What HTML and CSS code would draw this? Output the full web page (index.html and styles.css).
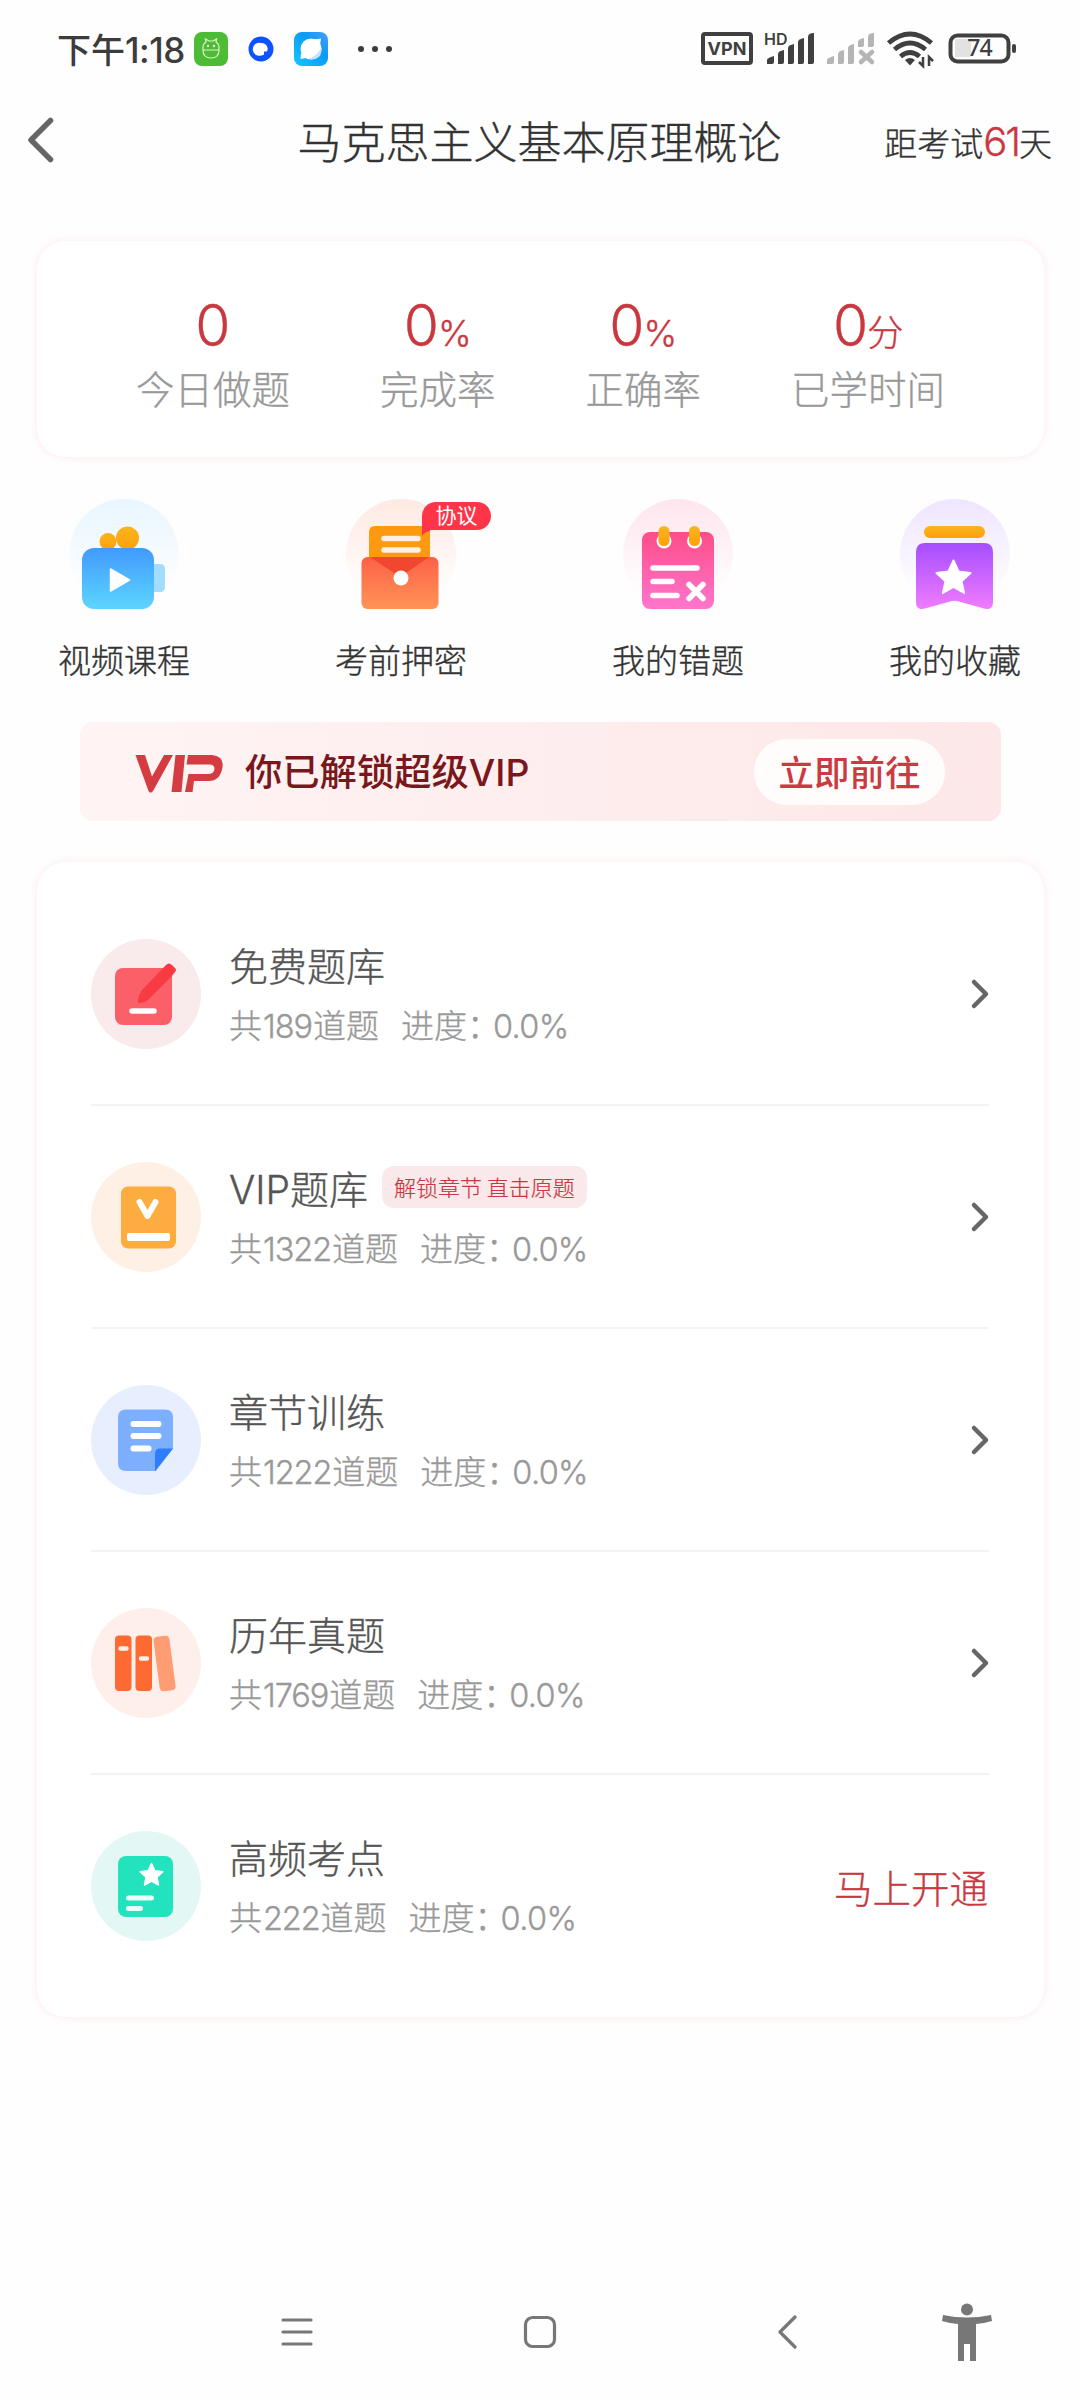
FILE: index.html
```html
<!DOCTYPE html>
<html lang="zh-CN">
<head>
<meta charset="utf-8">
<title>马克思主义基本原理概论</title>
<link rel="stylesheet" href="styles.css">
</head>
<body>
<div class="statusbar">
  <span class="clock">下午<span class="time">1:18</span></span>
  <svg class="apps" width="200" height="40" viewBox="0 0 200 40">
    <defs><linearGradient id="sky" x1="1" y1="0" x2="0" y2="1"><stop offset="0" stop-color="#4b9cf5"/><stop offset=".4" stop-color="#0a9bf6"/><stop offset="1" stop-color="#12c8fb"/></linearGradient></defs>
    <rect x="0" y="3" width="34" height="34" rx="8" fill="#4dbb35"/>
    <g fill="none" stroke="#d9f7c8" stroke-width="1.2"><path d="M9 21v-3q0-3 3-5l-.6-3 3.600 2h4l3.600-2-.6 3q3 2 3 5v3q0 8-8 8t-8-8zM9 21h16"/></g><circle cx="14" cy="17" r="1.200" fill="#d9f7c8"/><circle cx="20" cy="17" r="1.200" fill="#d9f7c8"/>
    <circle cx="67" cy="20" r="12.500" fill="#0d52ff"/><path d="M67 14a6.500 6.500 0 1 0 0 12.500q2 0 3-1v-3h3q1-2 .5-4a6.500 6.500 0 0 0-6.500-4.500z" fill="#fff"/>
    <rect x="100" y="3" width="34" height="34" rx="8" fill="url(#sky)"/><circle cx="117" cy="20" r="10.500" fill="#fff"/><path d="M120 10.500l7-1-1 7zM107 24l-.5 6 6-1z" fill="#fff"/><path d="M127.500 18q-3 8-13 12 12 2 13-8z" fill="#c5e2fb"/>
    <g fill="#3c3c3c"><circle cx="167" cy="20" r="3"/><circle cx="181" cy="20" r="3"/><circle cx="195" cy="20" r="3"/></g>
  </svg>
  <svg class="signals" width="320" height="40" viewBox="0 0 320 40">
    <rect x="3" y="5" width="48" height="29" rx="2" fill="none" stroke="#404040" stroke-width="4"/>
    <text x="27" y="26" text-anchor="middle" class="t-vpn">VPN</text>
    <text x="64" y="16" class="t-hd">HD</text>
    <g fill="#404040"><path d="M67 35v-4q0-2 7-4v6q0 2-2 2zM78 35v-10q0-3 6-4v12q0 2-2 2zM88 35v-16q0-3 6-4v18q0 2-2 2zM98 35v-22q0-3 6-4v24q0 2-2 2zM108 35v-27q0-4 6-4v29q0 2-2 2z"/></g>
    <g fill="#b5b5b5"><path d="M127 35v-4q0-2 7-4v6q0 2-2 2zM138 35v-10q0-3 6-4v12q0 2-2 2zM148 35v-16q0-3 6-4v18q0 2-2 2zM158 18v-5q0-3 6-4v7q0 2-2 2zM168 18v-10q0-4 6-4v12q0 2-2 2z"/></g>
    <path d="M161 23l11 10M172 23l-11 10" stroke="#b5b5b5" stroke-width="4.500" stroke-linecap="round"/>
    <g fill="none" stroke="#404040" stroke-width="4.800"><path d="M188.500 14q21.500-18 43 0M194.500 20.500q15.500-13 31 0M200.500 27.500q9.500-8 19 0"/></g>
    <path d="M205 31q5-4 10 0l-5 5.500z" fill="#404040"/><path d="M223 28v9l-4-4M229 37v-9l4 4" fill="none" stroke="#404040" stroke-width="2.500"/>
    <rect x="255" y="10" width="16" height="18" fill="#e2e2e2"/>
    <rect x="250.500" y="6.500" width="58" height="26" rx="7" fill="none" stroke="#404040" stroke-width="4"/>
    <rect x="312" y="15" width="4" height="9" rx="2" fill="#404040"/>
    <text x="279.500" y="27" text-anchor="middle" class="t-bat">74</text>
  </svg>
</div>

<header class="navbar">
  <svg width="30" height="50" viewBox="0 0 30 50"><path d="M25.500 5.500L6 25l19.500 19.500" fill="none" stroke="#666" stroke-width="5.500" stroke-linecap="round" stroke-linejoin="round"/></svg>
  <h1 class="title">马克思主义基本原理概论</h1>
  <div class="countdown">距考试<b>61</b>天</div>
</header>

<main>
<section class="stats card">
  <div class="stat"><div class="value">0</div><div class="label">今日做题</div></div>
  <div class="stat"><div class="value">0<small>%</small></div><div class="label">完成率</div></div>
  <div class="stat"><div class="value">0<small>%</small></div><div class="label">正确率</div></div>
  <div class="stat"><div class="value">0<small>分</small></div><div class="label">已学时间</div></div>
</section>

<nav class="shortcuts">
  <div class="shortcut">
    <svg width="110" height="110" viewBox="0 0 110 110">
      <defs><linearGradient id="c1" x2="0" y2="1"><stop stop-color="#e9f6ff"/><stop offset=".85" stop-color="#fefefe"/></linearGradient><linearGradient id="b1" x2="0" y2="1"><stop stop-color="#429afd"/><stop offset="1" stop-color="#5cd5ff"/></linearGradient><linearGradient id="gold" x2="0" y2="1"><stop stop-color="#f9b51c"/><stop offset="1" stop-color="#ffa00a"/></linearGradient></defs>
      <circle cx="55" cy="55" r="55" fill="url(#c1)"/>
      <circle cx="39" cy="42.500" r="8.500" fill="url(#gold)"/><circle cx="58.500" cy="39" r="11.500" fill="url(#gold)"/>
      <path d="M84 65h7q5 0 5 5v18q0 5-5 5h-7z" fill="#a3dcff"/>
      <rect x="13" y="49" width="72" height="61" rx="12" fill="url(#b1)"/><path d="M41.500 70l19 11-19 11z" fill="#fff" stroke="#fff" stroke-width="1.500" stroke-linejoin="round"/>
    </svg><span>视频课程</span>
  </div>
  <div class="shortcut">
    <svg width="110" height="110" viewBox="0 0 110 110">
      <defs><linearGradient id="c2" x2="0" y2="1"><stop stop-color="#ffe9e2"/><stop offset=".85" stop-color="#fefefe"/></linearGradient><linearGradient id="b2" x2="0" y2="1"><stop stop-color="#fd6148"/><stop offset="1" stop-color="#ff9456"/></linearGradient></defs>
      <circle cx="55" cy="55" r="55" fill="url(#c2)"/>
      <path d="M23 60V33q0-6 6-6h49q6 0 6 6v27z" fill="#ff990f"/>
      <path d="M38 39.500h34M38 51h34" stroke="#fff0df" stroke-width="5.500" stroke-linecap="round"/>
      <rect x="15.500" y="58" width="77" height="52" rx="6" fill="url(#b2)"/><path d="M24 58h59L60 74q-6 4-12 0z" fill="#f0472e"/><circle cx="55" cy="79" r="7.500" fill="#fff"/>
    </svg><em class="badge">协议<svg width="8" height="8" viewBox="0 0 8 8"><path d="M0 0v8q2-4 8-5V0z" fill="#fe3448"/></svg></em><span>考前押密</span>
  </div>
  <div class="shortcut">
    <svg width="110" height="110" viewBox="0 0 110 110">
      <defs><linearGradient id="c3" x2="0" y2="1"><stop stop-color="#ffe5ef"/><stop offset=".85" stop-color="#fefefe"/></linearGradient><linearGradient id="b3" x2="0" y2="1"><stop stop-color="#fd4d88"/><stop offset="1" stop-color="#ff76ce"/></linearGradient></defs>
      <circle cx="55" cy="55" r="55" fill="url(#c3)"/>
      <rect x="19" y="33" width="72" height="77" rx="8" fill="url(#b3)"/>
      <circle cx="41" cy="42" r="7.500" fill="#fff"/><circle cx="71.500" cy="42" r="7.500" fill="#fff"/>
      <rect x="35.500" y="27" width="11" height="20" rx="5.500" fill="url(#gold)"/><rect x="66" y="27" width="11" height="20" rx="5.500" fill="url(#gold)"/>
      <path d="M30 69h44M30 82.500h19M30 96.500h24" stroke="#fff" stroke-width="5.500" stroke-linecap="round"/><path d="M66 85.500l14 14M80 85.500l-14 14" stroke="#fff" stroke-width="5.500" stroke-linecap="round"/>
    </svg><span>我的错题</span>
  </div>
  <div class="shortcut">
    <svg width="110" height="110" viewBox="0 0 110 110">
      <defs><linearGradient id="c4" x2="0" y2="1"><stop stop-color="#efe5ff"/><stop offset=".85" stop-color="#fefefe"/></linearGradient><linearGradient id="b4" x2="0" y2="1"><stop stop-color="#a54eff"/><stop offset="1" stop-color="#f07cff"/></linearGradient></defs>
      <circle cx="55" cy="55" r="55" fill="url(#c4)"/>
      <rect x="24" y="27" width="61" height="12" rx="6" fill="url(#gold)"/>
      <path d="M16 53q0-9 9-9h59q9 0 9 9v50q0 9-9 6.500L57 102q-2.500-.7-5 0l-27 7.500q-9 2.500-9-6.500z" fill="url(#b4)"/>
      <path d="M53.500 61.500l5 11 12 1.400-9 8.300 2.600 11.800-10.600-6-10.600 6 2.600-11.800-9-8.300 12-1.400z" fill="#fff" stroke="#fff" stroke-width="2" stroke-linejoin="round"/>
    </svg><span>我的收藏</span>
  </div>
</nav>

<section class="vip">
  <svg width="90" height="42" viewBox="0 0 90 42" fill="#d53c41"><path d="M1.500 4H11l7 21.500L30 4h9L19 40q-2.500 3.500-4.500 0zM41.500 4h9.500l-3.500 37H37.500zM54 4h24q12 1 10.500 12-2 14-14 14H60l-1.500 11H51l3.500-18H74q6 0 6.500-5 0-4.500-5-4.500H52.500z"/></svg>
  <p>你已解锁超级VIP</p>
  <button class="go">立即前往</button>
</section>

<section class="bank card">
  <div class="row">
    <svg width="110" height="110" viewBox="0 0 110 110"><circle cx="55" cy="55" r="55" fill="#f9eaec"/><rect x="24" y="29" width="57" height="57" rx="8" fill="#fb6069"/><path d="M75 26q3-3 6 0l3 3q2 2 0 4l-4 5-23 23q-3 2.500-8 3-3 0-2-3 1-6 4-10z" fill="#f83b42"/><path d="M41 72h22" stroke="#fff" stroke-width="5.500" stroke-linecap="round"/></svg>
    <div class="info"><h2>免费题库</h2><p>共<span>189</span>道题<i></i>进度：<span class="pct">0.0%</span></p></div>
    <svg class="chev" width="20" height="32" viewBox="0 0 20 32"><path d="M4 4l12 12L4 28"/></svg>
  </div>
  <div class="row">
    <svg width="110" height="110" viewBox="0 0 110 110"><circle cx="55" cy="55" r="55" fill="#fef0e4"/><rect x="30" y="24.500" width="55" height="62" rx="7" fill="#fdac3f"/><path d="M48.500 40l8 14 8-14" fill="none" stroke="#fff" stroke-width="6" stroke-linecap="round" stroke-linejoin="round"/><rect x="36" y="71" width="43" height="8" rx="2" fill="#fff"/></svg>
    <div class="info"><h2><span>VIP</span>题库 <mark>解锁章节 直击原题</mark></h2><p>共<span>1322</span>道题<i></i>进度：<span class="pct">0.0%</span></p></div>
    <svg class="chev" width="20" height="32" viewBox="0 0 20 32"><path d="M4 4l12 12L4 28"/></svg>
  </div>
  <div class="row">
    <svg width="110" height="110" viewBox="0 0 110 110"><circle cx="55" cy="55" r="55" fill="#e7effe"/><path d="M35 24.500h39q8 0 8 8v31L65 86H35q-8 0-8-8V32.500q0-8 8-8z" fill="#7cb0ff"/><path d="M82 63.500L64 86V69q0-5.500 5-5.500z" fill="#2e7dfc"/><path d="M42.500 39h25M42.500 51h25M42.500 63.500h15" stroke="#fff" stroke-width="6" stroke-linecap="round"/></svg>
    <div class="info"><h2>章节训练</h2><p>共<span>1222</span>道题<i></i>进度：<span class="pct">0.0%</span></p></div>
    <svg class="chev" width="20" height="32" viewBox="0 0 20 32"><path d="M4 4l12 12L4 28"/></svg>
  </div>
  <div class="row">
    <svg width="110" height="110" viewBox="0 0 110 110"><circle cx="55" cy="55" r="55" fill="#feefeb"/><rect x="65.500" y="28" width="16" height="55" rx="4" fill="#fe9c73" transform="rotate(-7.500 73.500 55)"/><rect x="24" y="27.500" width="16.500" height="55.500" rx="4" fill="#fe6a31"/><rect x="44.500" y="27.500" width="16.500" height="55.500" rx="4" fill="#fe6a31"/><path d="M29.500 40.500h6M50 50.500h6" stroke="#fff0e8" stroke-width="4.500" stroke-linecap="round"/></svg>
    <div class="info"><h2>历年真题</h2><p>共<span>1769</span>道题<i></i>进度：<span class="pct">0.0%</span></p></div>
    <svg class="chev" width="20" height="32" viewBox="0 0 20 32"><path d="M4 4l12 12L4 28"/></svg>
  </div>
  <div class="row">
    <svg width="110" height="110" viewBox="0 0 110 110"><circle cx="55" cy="55" r="55" fill="#e3f8f5"/><rect x="27" y="25" width="55" height="61" rx="8" fill="#22e3be"/><path d="M60.500 32.500l3.400 7.200 7.900 1-5.800 5.400 1.500 8-7-4-7 4 1.500-8-5.800-5.400 7.900-1z" fill="#fff" stroke="#fff" stroke-width="1.500" stroke-linejoin="round"/><path d="M37.500 67h23M37.500 77.500h12" stroke="#e8fffa" stroke-width="5" stroke-linecap="round"/></svg>
    <div class="info"><h2>高频考点</h2><p>共<span>222</span>道题<i></i>进度：<span class="pct">0.0%</span></p></div>
    <a class="open">马上开通</a>
  </div>
</section>
</main>

<footer class="sysnav">
  <svg class="menu" width="34" height="34" viewBox="0 0 34 34"><path d="M3 5h28M3 17h28M3 29h28"/></svg>
  <svg class="home" width="34" height="34" viewBox="0 0 34 34"><rect x="2.500" y="2.500" width="29" height="29" rx="7"/></svg>
  <svg class="back" width="34" height="34" viewBox="0 0 34 34"><path d="M25 2L10 17 25 32"/></svg>
  <svg class="person" width="50" height="58" viewBox="0 0 50 58"><circle cx="25" cy="6.500" r="6"/><path d="M1 12q24 5 48 0l1 6q-8 2.500-16 3v37h-6V41h-6v17h-6V21q-8-.5-16-3z"/></svg>
</footer>
</body>
</html>
```
FILE: styles.css
```css
* { box-sizing: border-box; margin: 0; padding: 0; }
body {
  width: 1080px; height: 2400px; background: #fefefe; color: #333;
  font-family: "Noto Sans CJK SC", sans-serif; font-weight: 300;
  display: flex; flex-direction: column; overflow: hidden;
}
svg { display: block; flex: none; }
h1, h2, b, em, small, i { font-weight: inherit; font-style: normal; }

.statusbar { height: 98px; padding: 0 60px 0 57px; display: flex; align-items: center; }
.clock { width: 137px; font-size: 34px; font-weight: 500; line-height: 50px; color: #3c3c3c; white-space: nowrap; }
.time { font-family: Inter, sans-serif; font-size: 35px; letter-spacing: -.5px; }
.signals { margin-left: auto; }
.signals text { fill: #404040; }
.t-vpn { font: 700 18px Inter, sans-serif; }
.t-hd { font: 600 16px Inter, sans-serif; }
.t-bat { font: 500 23px "Noto Sans", sans-serif; letter-spacing: -.8px; }

.navbar { height: 84px; display: grid; grid-template-columns: 200px 1fr 200px; align-items: center; padding: 0 28px 0 25px; }
.title { text-align: center; font-size: 44px; line-height: 60px; padding-left: 2px; }
.countdown { justify-self: end; display: flex; align-items: baseline; font-size: 33px; line-height: 44px; white-space: nowrap; padding-top: 3px; }
.countdown b { color: #c9383f; font-family: Inter, sans-serif; font-size: 40px; letter-spacing: -2px; }
.title, .countdown, .value, .label, .shortcut span, .info, .open { -webkit-text-stroke: .35px currentColor; }

main { padding: 59px 36px 0 37px; }
.card { background: #fff; border-radius: 29px; box-shadow: 0 0 6px 2px rgba(253, 235, 238, .7); }

.stats { height: 216px; display: flex; justify-content: center; gap: 90px; padding-top: 50px; }
.stat { text-align: center; }
.value { height: 64px; line-height: 69px; font-family: Inter, "Noto Sans CJK SC", sans-serif; font-size: 57px; color: #c9383f; }
.value small { font-size: 36px; margin-left: -1px; }
.label { font-size: 38.500px; line-height: 64px; color: #999; }

.shortcuts { margin: 42px -12px 0 21px; padding-right: 35px; display: flex; justify-content: space-between; }
.shortcut { width: 132px; display: flex; flex-direction: column; align-items: center; position: relative; }
.shortcut span { margin-top: 27px; font-size: 33px; line-height: 46px; white-space: nowrap; }
.badge {
  position: absolute; left: 87px; top: 3px; width: 69px; height: 28px; border-radius: 14px 14px 14px 0;
  background: #fe3448; color: #fff; font-size: 21px; font-weight: 400; line-height: 25px; text-align: center;
}
.badge svg { position: absolute; left: 0; top: 26px; }

.vip {
  width: 921px; height: 99px; margin: 40px 0 0 43px; padding: 0 56px 0 54px; border-radius: 13px;
  display: flex; align-items: center; background: linear-gradient(90deg, #fff4f4, #fde7e8);
}
.vip p { margin-left: 21px; padding-top: 2px; font-family: Inter, "Noto Sans CJK SC", sans-serif; font-size: 37.300px; font-weight: 500; line-height: 54px; color: #7a171b; white-space: nowrap; }
.go { margin-left: auto; width: 191px; height: 66px; border: 0; border-radius: 33px; background: #fffdfb; color: #cb3a40; font: 500 35.500px "Noto Sans CJK SC", sans-serif; line-height: 58px; padding-bottom: 2px; }

.bank { margin-top: 41px; height: 1155px; padding: 21px 55px 19px 54px; }
.row { height: 223px; display: flex; align-items: center; border-bottom: 2px solid #f4f4f4; }
.row:last-child { height: 221px; border-bottom: 0; }
.info { margin-left: 28px; flex: 1; padding-top: 2px; }
.info span { font-family: Inter, sans-serif; }
.info h2 { font-size: 39px; line-height: 60px; height: 60px; color: #555; display: flex; align-items: baseline; }
.info p { font-size: 33px; line-height: 61px; height: 61px; color: #999; display: flex; align-items: baseline; }
.info p span { letter-spacing: -1.100px; font-size: 32.500px; margin: 0 1px; }
.info p .pct { margin-left: -7px; letter-spacing: -.6px; }
.info i { width: 22px; }
mark { align-self: center; margin-left: 14px; height: 42px; padding: 0 12px; border-radius: 12px; background: #fae9eb; color: #c9383f; font-size: 22px; line-height: 41px; -webkit-text-stroke: .2px currentColor; }
.chev path { fill: none; stroke: #666; stroke-width: 4.500; stroke-linecap: round; stroke-linejoin: round; }
.chev { margin-right: -1px; }
.open { font-size: 38.500px; color: #c9383f; line-height: 60px; margin-right: 1px; }

.sysnav { margin-top: auto; height: 136px; padding-left: 280px; display: flex; align-items: center; }
.sysnav path, .sysnav rect { fill: none; stroke: #777; stroke-width: 3.200; stroke-linecap: round; stroke-linejoin: round; }
.home { margin-left: 209px; }
.back { margin-left: 213px; }
.person { margin-left: 138px; }
.sysnav .person path, .person circle { fill: #777; stroke: none; }
```
